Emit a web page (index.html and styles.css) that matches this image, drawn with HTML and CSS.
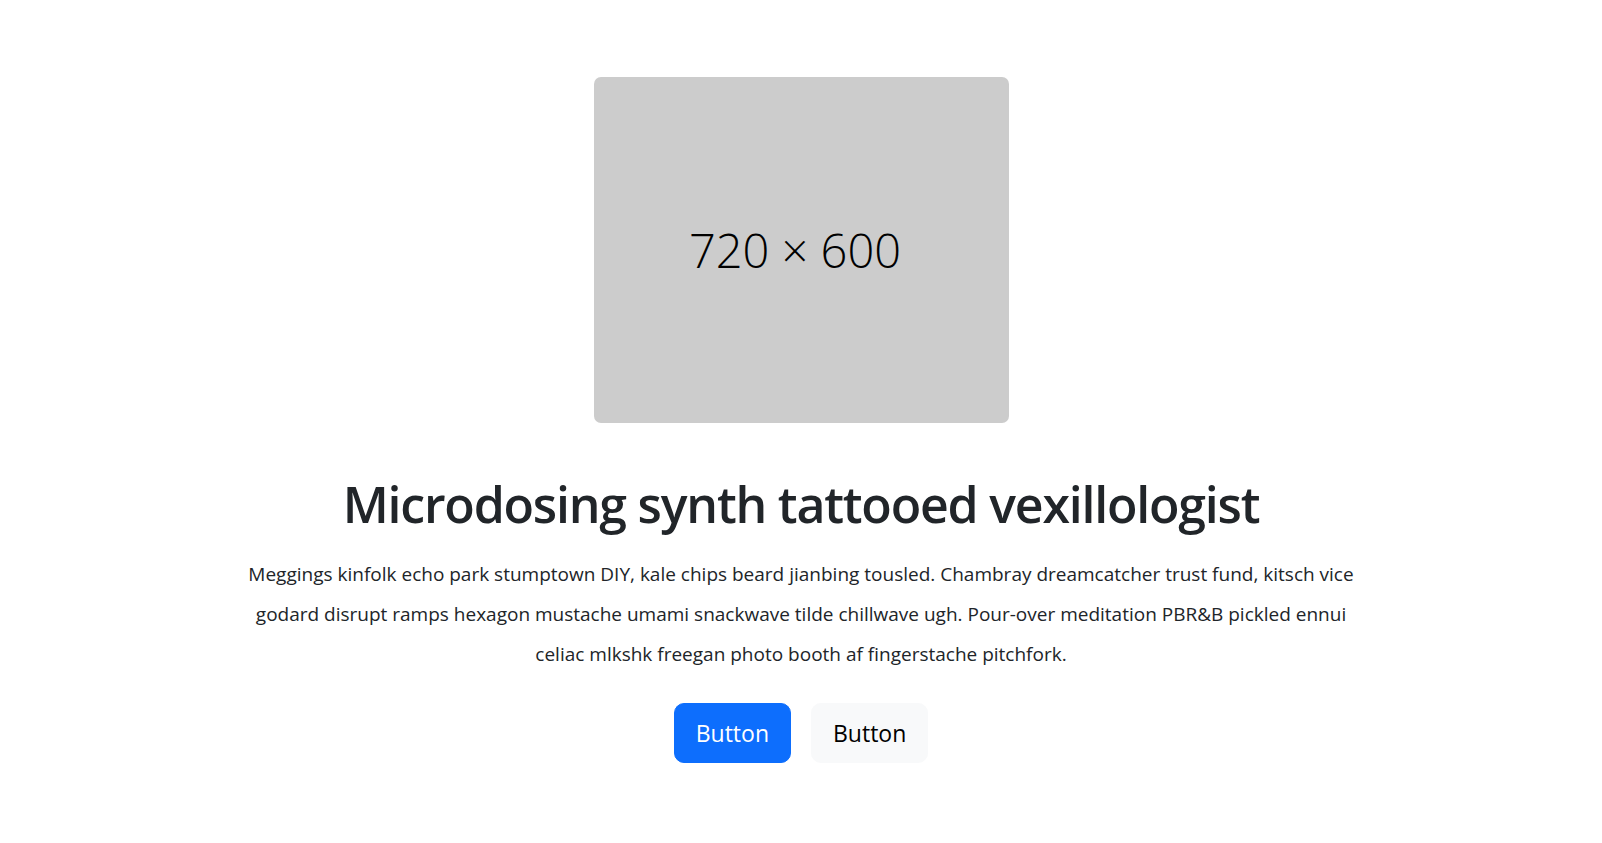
FILE: index.html
```html
<!DOCTYPE html>
<html lang="en">
<head>
<meta charset="utf-8">
<title>Hero</title>
<link rel="stylesheet" href="styles.css">
</head>
<body>
<section class="hero">
  <div class="hero-img"><span>720 × 600</span></div>
  <h1 class="hero-title">Microdosing synth tattooed vexillologist</h1>
  <p class="hero-text">Meggings kinfolk echo park stumptown DIY, kale chips beard jianbing tousled. Chambray dreamcatcher trust fund, kitsch vice godard disrupt ramps hexagon mustache umami snackwave tilde chillwave ugh. Pour-over meditation PBR&amp;B pickled ennui celiac mlkshk freegan photo booth af fingerstache pitchfork.</p>
  <div class="hero-actions">
    <button class="btn btn-primary">Button</button>
    <button class="btn btn-light">Button</button>
  </div>
</section>
</body>
</html>
```
FILE: styles.css
```css
* { box-sizing: border-box; }
html, body { margin: 0; padding: 0; background: #fff; }
body {
  font-family: "Open Sans", "Noto Sans", sans-serif;
  color: #212529;
}
.hero {
  display: flex;
  flex-direction: column;
  align-items: center;
  padding-top: 77px;
}
.hero-img {
  width: 415px;
  height: 346px;
  background: #cccccc;
  border-radius: 7px;
  display: flex;
  align-items: center;
  justify-content: center;
  font-size: 47px;
  font-weight: 300;
  color: #000;
}
.hero-img span { margin-right: 12px; }
.hero-title {
  margin: 51px 0 20px;
  font-size: 50px;
  font-weight: 600;
  line-height: 60px;
  letter-spacing: -1.2px;
  color: #212529;
}
.hero-text {
  margin: 0;
  width: 1120px;
  text-align: center;
  font-size: 19px;
  line-height: 40px;
  color: #212529;
}
.hero-actions {
  display: flex;
  gap: 20px;
  margin-top: 29px;
}
.btn {
  font-family: inherit;
  font-size: 23px;
  line-height: 36px;
  padding: 11px 21px;
  border: 1px solid transparent;
  border-radius: 10px;
  cursor: pointer;
}
.btn-primary { background: #0d6efd; border-color: #0d6efd; color: #fff; }
.btn-light { background: #f8f9fa; border-color: #f8f9fa; color: #000; }
```
